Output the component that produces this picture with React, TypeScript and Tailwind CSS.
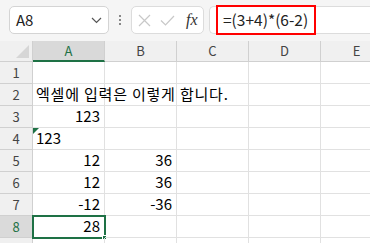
import React from 'react';

const cellFont = { fontFamily: '"Noto Sans CJK KR", "Noto Sans", sans-serif' };

type Cell = { v?: string; align?: 'left' | 'right'; flag?: boolean; wide?: boolean };

const rows: Cell[][] = [
  [{}, {}, {}, {}, {}],
  [{ v: '엑셀에 입력은 이렇게 합니다.', align: 'left', wide: true }, {}, {}, {}, {}],
  [{ v: '123', align: 'right' }, {}, {}, {}, {}],
  [{ v: '123', align: 'left', flag: true }, {}, {}, {}, {}],
  [{ v: '12', align: 'right' }, { v: '36', align: 'right' }, {}, {}, {}],
  [{ v: '12', align: 'right' }, { v: '36', align: 'right' }, {}, {}, {}],
  [{ v: '-12', align: 'right' }, { v: '-36', align: 'right' }, {}, {}, {}],
  [{ v: '28', align: 'right' }, {}, {}, {}, {}],
  [{}, {}, {}, {}, {}],
];

const cols = ['A', 'B', 'C', 'D', 'E'];

function Toolbar() {
  return (
    <div className="relative flex h-[41px] items-start bg-[#f5f5f5] pt-[6px]">
      <div className="ml-[9px] flex h-[28px] w-[100px] items-center justify-between rounded-[5px] border border-[#d4d4d4] bg-white px-[6px]">
        <span className="text-[15px] text-[#222]" style={cellFont}>A8</span>
        <svg width="11" height="7" viewBox="0 0 11 7" fill="none">
          <path d="M1 1l4.5 4.5L10 1" stroke="#555" strokeWidth="1.2" />
        </svg>
      </div>
      <div className="flex h-[28px] w-[22px] flex-col items-center justify-center gap-[2px]">
        <span className="h-[2px] w-[2px] bg-[#888]" />
        <span className="h-[2px] w-[2px] bg-[#888]" />
        <span className="h-[2px] w-[2px] bg-[#888]" />
      </div>
      <div className="flex h-[28px] w-[73px] items-center rounded-[5px] border border-[#dcdcdc] bg-white pl-[6px]">
        <svg width="13" height="13" viewBox="0 0 13 13" fill="none">
          <path d="M1 1l11 11M12 1L1 12" stroke="#c8c8c8" strokeWidth="1.2" />
        </svg>
        <svg className="ml-[9px]" width="15" height="11" viewBox="0 0 15 11" fill="none">
          <path d="M1 5.5l4.5 4.5L14 1" stroke="#c8c8c8" strokeWidth="1.2" />
        </svg>
        <span
          className="ml-[11px] text-[16px] italic text-[#333]"
          style={{ fontFamily: '"Liberation Serif", serif' }}
        >
          fx
        </span>
      </div>
      <div className="ml-[5px] flex h-[28px] flex-1 items-center rounded-l-[5px] border border-r-0 border-[#dcdcdc] bg-white pl-[13px]">
        <span className="text-[15.5px] text-[#222]" style={cellFont}>=(3+4)*(6-2)</span>
      </div>
      {/* red highlight around the formula */}
      <div className="absolute left-[216px] top-[5px] h-[30px] w-[100px] border-2 border-[#ff0000]" />
    </div>
  );
}

export default function App() {
  return (
    <div className="h-[243px] w-[370px] overflow-hidden bg-white">
      <Toolbar />
      <div className="grid grid-cols-[33px_72px_72px_72px_72px_72px] grid-rows-[21px_repeat(9,22px)]">
        <div className="relative border-b border-r border-[#d0d0d0] bg-[#f0f0f0]">
          <svg className="absolute bottom-[3px] right-[3px]" width="13" height="13" viewBox="0 0 13 13">
            <path d="M13 0V13H0Z" fill="#d6d6d6" />
          </svg>
        </div>
        {cols.map((c) =>
          c === 'A' ? (
            <div
              key={c}
              className="flex items-center justify-center border-b-[2px] border-r border-b-[#1e7145] border-r-[#d0d0d0] bg-[#d9d9d9] text-[13px] text-[#1e7145]"
              style={cellFont}
            >
              {c}
            </div>
          ) : (
            <div
              key={c}
              className="flex items-center justify-center border-b border-r border-[#d0d0d0] bg-[#f0f0f0] text-[13px] text-[#444]"
              style={cellFont}
            >
              {c}
            </div>
          )
        )}
        {rows.map((r, ri) => (
          <React.Fragment key={ri}>
            <div
              className={
                ri === 7
                  ? 'flex items-center justify-center border-b border-r border-[#d0d0d0] bg-[#dadada] text-[13px] text-[#1e7145]'
                  : 'flex items-center justify-center border-b border-r border-[#d0d0d0] bg-[#f0f0f0] text-[13px] text-[#444]'
              }
              style={cellFont}
            >
              {ri < 8 ? ri + 1 : ''}
            </div>
            {r.map((cell, ci) => (
              <div
                key={ci}
                className={
                  'relative flex items-end whitespace-nowrap border-b border-r border-[#e1e1e1] pb-[2px] text-[15px] text-black ' +
                  (cell.align === 'right' ? 'justify-end pr-[4px]' : 'justify-start pl-[3px]')
                }
                style={cellFont}
              >
                {cell.flag && (
                  <svg className="absolute left-0 top-0" width="6" height="6" viewBox="0 0 6 6">
                    <path d="M0 0H6L0 6Z" fill="#1e7145" />
                  </svg>
                )}
                <span className={cell.wide ? 'leading-[18px] tracking-[0.8px]' : 'leading-[18px]'}>{cell.v}</span>
                {ri === 7 && ci === 0 && (
                  <>
                    <div className="absolute -left-[1px] -top-[1px] h-[24px] w-[74px] border-2 border-[#1e7145]" />
                    <div className="absolute -bottom-[3px] -right-[3px] h-[5px] w-[5px] border border-white bg-[#1e7145]" />
                  </>
                )}
              </div>
            ))}
          </React.Fragment>
        ))}
      </div>
    </div>
  );
}
